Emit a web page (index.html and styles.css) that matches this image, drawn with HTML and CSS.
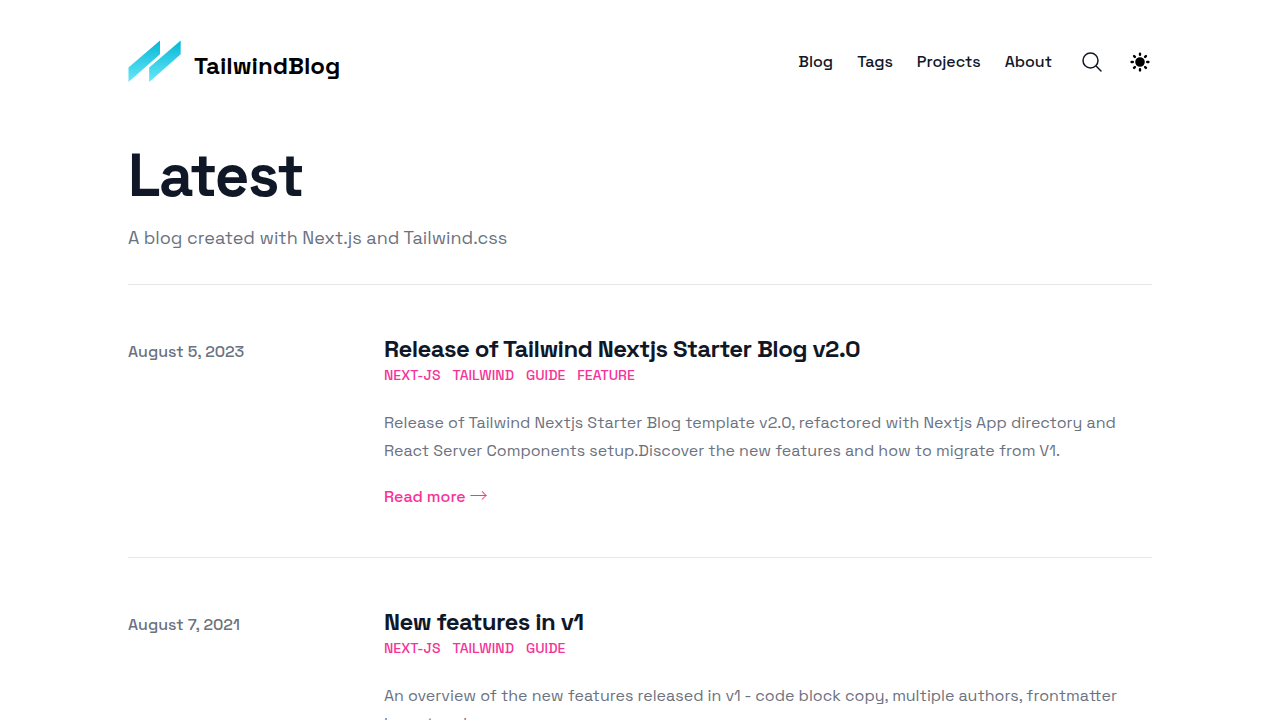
FILE: index.html
```html
<!DOCTYPE html>
<html lang="en">
<head>
<meta charset="utf-8">
<meta name="viewport" content="width=device-width, initial-scale=1">
<title>TailwindBlog</title>
<link rel="stylesheet" href="styles.css">
</head>
<body>
<div class="container">
  <header class="header">
    <a class="brand" href="#" aria-label="TailwindBlog">
      <svg class="brand-mark" viewBox="0 0 54 44" width="54" height="44" aria-hidden="true">
        <defs>
          <linearGradient id="mark" x1="0" y1="0" x2="0" y2="1">
            <stop offset="0" stop-color="#06b6d4"/>
            <stop offset="1" stop-color="#67e8f9"/>
          </linearGradient>
        </defs>
        <path fill="url(#mark)" d="M.5 27.500 32 .5V14.200L.5 42Z"/>
        <path fill="url(#mark)" d="M21.200 27.500 52.700 .5V14.200L21.200 42Z"/>
      </svg>
      <span class="brand-name">TailwindBlog</span>
    </a>
    <div class="actions">
      <nav class="nav">
        <a href="#">Blog</a>
        <a href="#">Tags</a>
        <a href="#">Projects</a>
        <a href="#">About</a>
      </nav>
      <button class="icon-button" type="button" aria-label="Search">
        <svg viewBox="0 0 24 24" width="24" height="24" fill="none" stroke="currentColor" stroke-width="1.5" stroke-linecap="round" stroke-linejoin="round"><path d="m21 21-5.197-5.197m0 0A7.500 7.500 0 1 0 5.196 5.196a7.500 7.500 0 0 0 10.607 10.607Z"/></svg>
      </button>
      <button class="icon-button theme" type="button" aria-label="Theme switcher">
        <svg viewBox="0 0 20 20" width="24" height="24" fill="currentColor"><path fill-rule="evenodd" clip-rule="evenodd" d="M10 2a1 1 0 011 1v1a1 1 0 11-2 0V3a1 1 0 011-1zm4 8a4 4 0 11-8 0 4 4 0 018 0zm-.464 4.950l.707.707a1 1 0 001.414-1.414l-.707-.707a1 1 0 00-1.414 1.414zm2.120-10.607a1 1 0 010 1.414l-.706.707a1 1 0 11-1.414-1.414l.707-.707a1 1 0 011.414 0zM17 11a1 1 0 100-2h-1a1 1 0 100 2h1zm-7 4a1 1 0 011 1v1a1 1 0 11-2 0v-1a1 1 0 011-1zM5.050 6.464A1 1 0 106.465 5.050l-.708-.707a1 1 0 00-1.414 1.414l.707.707zm1.414 8.486l-.707.707a1 1 0 01-1.414-1.414l.707-.707a1 1 0 011.414 1.414zM4 11a1 1 0 100-2H3a1 1 0 000 2h1z"/></svg>
      </button>
    </div>
  </header>
  <main>
    <div class="intro">
      <h1>Latest</h1>
      <p>A blog created with Next.js and Tailwind.css</p>
    </div>
    <ul class="posts">
      <li>
        <article class="post">
          <time class="date" datetime="2023-08-05">August 5, 2023</time>
          <div class="post-body">
            <h2><a href="#">Release of Tailwind Nextjs Starter Blog v2.0</a></h2>
            <div class="tags"><a href="#">next-js</a><a href="#">tailwind</a><a href="#">guide</a><a href="#">feature</a></div>
            <p class="summary">Release of Tailwind Nextjs Starter Blog template v2.0, refactored with Nextjs App directory and React Server Components setup.Discover the new features and how to migrate from V1.</p>
            <a class="more" href="#">Read more <span class="arrow">→</span></a>
          </div>
        </article>
      </li>
      <li>
        <article class="post">
          <time class="date" datetime="2021-08-07">August 7, 2021</time>
          <div class="post-body">
            <h2><a href="#">New features in v1</a></h2>
            <div class="tags"><a href="#">next-js</a><a href="#">tailwind</a><a href="#">guide</a></div>
            <p class="summary">An overview of the new features released in v1 - code block copy, multiple authors, frontmatter layout and more</p>
            <a class="more" href="#">Read more <span class="arrow">→</span></a>
          </div>
        </article>
      </li>
    </ul>
  </main>
</div>
</body>
</html>
```
FILE: styles.css
```css
* { box-sizing: border-box; }
body {
  margin: 0;
  background: #fff;
  color: #101828;
  font-family: "Space Grotesk", Inter, "Liberation Sans", sans-serif;
  font-size: 16px;
  line-height: 24px;
}
h1, h2, p, ul { margin: 0; padding: 0; }
ul { list-style: none; }
a { color: inherit; text-decoration: none; }
.container { width: 80%; margin: 0 auto; }
.header { display: flex; align-items: center; justify-content: space-between; padding: 40px 0; }
.brand { display: flex; align-items: center; gap: 12px; color: #000; }
.brand-mark { display: block; }
.brand-name { padding-top: 8px; font-size: 24px; line-height: 32px; font-weight: 600; }
.actions { display: flex; align-items: center; gap: 24px; }
.nav { display: flex; gap: 24px; padding-right: 4px; font-weight: 500; }
.icon-button { display: block; padding: 0; border: 0; background: none; color: #101828; cursor: pointer; }
.icon-button svg { display: block; }
.theme { color: #000; }
.intro { padding: 24px 0 32px; border-bottom: 1px solid #e5e7eb; }
h1 { font-size: 60px; line-height: 56px; font-weight: 700; letter-spacing: -0.025em; }
.intro p { margin-top: 20px; color: #6b7280; font-size: 18px; line-height: 28px; }
.posts li { padding: 48px 0; }
.posts li + li { border-top: 1px solid #e5e7eb; }
.post { display: grid; grid-template-columns: 1fr 3fr; align-items: baseline; }
.date { color: #6b7280; font-weight: 500; }
h2 { font-size: 24px; line-height: 32px; font-weight: 700; letter-spacing: -0.025em; }
.tags { display: flex; flex-wrap: wrap; gap: 12px; color: #f6339a; font-size: 14px; line-height: 20px; font-weight: 500; text-transform: uppercase; }
.summary { margin: 24px 0 20px; color: #6b7280; line-height: 28px; }
.more { display: block; color: #f6339a; font-weight: 500; }
.arrow { font-family: "Noto Sans CJK JP", sans-serif; font-size: 18px; font-weight: 300; line-height: 12px; }
```
